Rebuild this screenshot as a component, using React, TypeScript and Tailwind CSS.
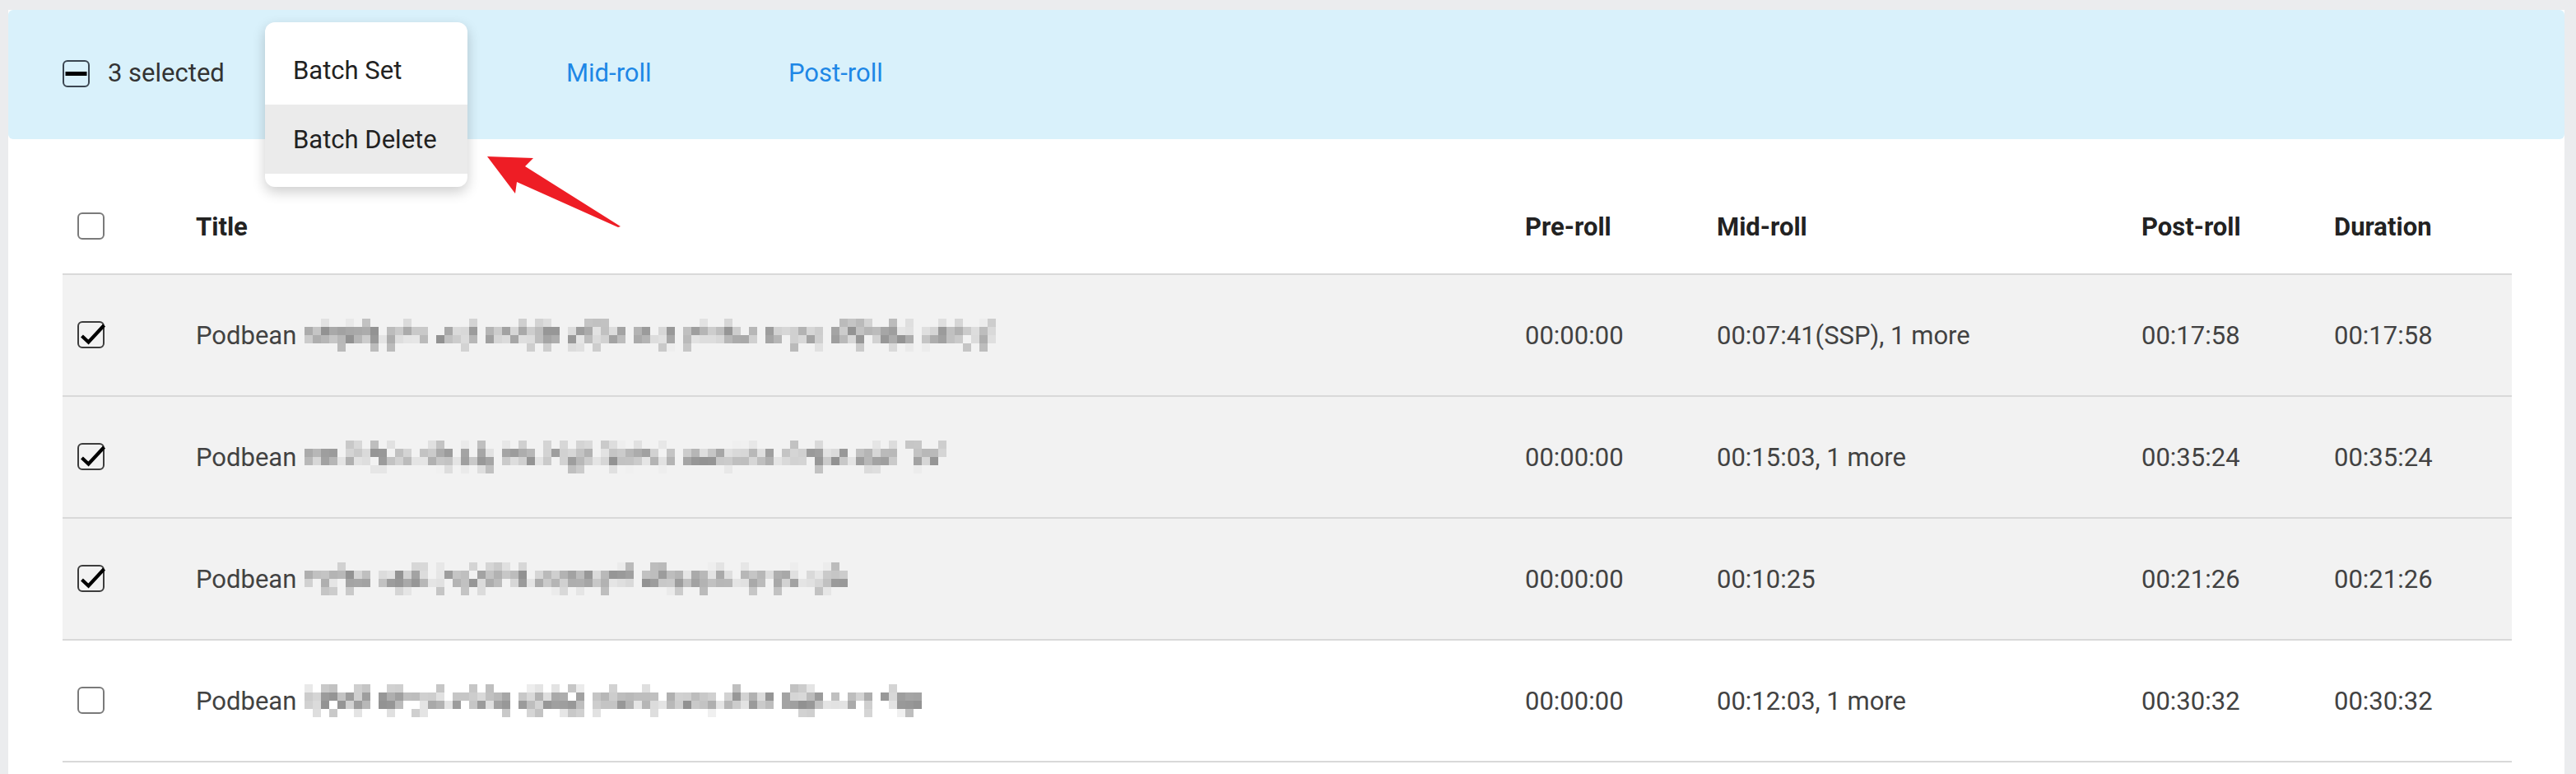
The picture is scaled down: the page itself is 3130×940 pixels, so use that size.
import React from "react";

const FONT = { fontFamily: "Roboto, 'Noto Sans', 'Liberation Sans', sans-serif" };

function makeMosaic(seed: number, cols: number): (string | null)[][] {
  let s = seed;
  const rnd = () => {
    s = (s * 1103515245 + 12345) & 0x7fffffff;
    return s / 0x7fffffff;
  };
  const out: (string | null)[][] = [];
  let word = 4 + Math.floor(rnd() * 8);
  for (let i = 0; i < cols; i++) {
    if (word <= 0 && i < cols - 2) {
      out.push([null, null, rnd() < 0.4 ? "#e4e4e4" : null, null]);
      word = 4 + Math.floor(rnd() * 9);
      continue;
    }
    word--;
    const col: (string | null)[] = [];
    const probs = [0.35, 0.95, 0.95, 0.3];
    for (let r = 0; r < 4; r++) {
      if (rnd() < probs[r]) {
        const mid = r === 1 || r === 2;
        const base = mid ? 145 : 185;
        const g = Math.round(base + rnd() * (mid ? 85 : 55));
        col.push(`rgb(${g},${g},${g})`);
      } else col.push(null);
    }
    out.push(col);
  }
  return out;
}

function Mosaic({ seed, cols }: { seed: number; cols: number }) {
  const data = makeMosaic(seed, cols);
  return (
    <div className="flex ml-[10px]">
      {data.map((col, i) => (
        <div key={i} className="flex flex-col">
          {col.map((c, j) => (
            <div key={j} className="w-[10px] h-[10px]" style={{ backgroundColor: c ?? "transparent" }} />
          ))}
        </div>
      ))}
    </div>
  );
}

function Checkbox({ checked }: { checked: boolean }) {
  return (
    <svg width="36" height="34" viewBox="0 0 36 34" className="block">
      <rect x="1" y="1" width="31" height="31" rx="5" fill="none" stroke={checked ? "#3d3d3d" : "#7a7a7a"} strokeWidth="2" />
      {checked && (
        <path d="M5.5 18 L13.5 25.5 L32.5 5" fill="none" stroke="#000" strokeWidth="4.2" strokeLinejoin="miter" />
      )}
    </svg>
  );
}

function Indeterminate() {
  return (
    <svg width="34" height="34" viewBox="0 0 34 34" className="block">
      <rect x="1" y="1" width="31" height="31" rx="5" fill="none" stroke="#3b4651" strokeWidth="2" />
      <rect x="3.5" y="14" width="26" height="5" fill="#000" />
    </svg>
  );
}

const rows = [
  { checked: true, seed: 11, cols: 84, pre: "00:00:00", mid: "00:07:41(SSP), 1 more", post: "00:17:58", dur: "00:17:58" },
  { checked: true, seed: 37, cols: 78, pre: "00:00:00", mid: "00:15:03, 1 more", post: "00:35:24", dur: "00:35:24" },
  { checked: true, seed: 73, cols: 66, pre: "00:00:00", mid: "00:10:25", post: "00:21:26", dur: "00:21:26" },
  { checked: false, seed: 151, cols: 75, pre: "00:00:00", mid: "00:12:03, 1 more", post: "00:30:32", dur: "00:30:32" },
];

const GRID = "grid grid-cols-[162px_1615px_233px_516px_234px_216px] items-center";

export default function App() {
  return (
    <div className="w-[3130px] h-[940px] bg-[#ebecee] overflow-hidden pl-[10px] pt-[12px] pr-[14px]" style={FONT}>
      <div className="relative bg-white h-[960px]">
        {/* selection bar */}
        <div className="h-[157px] bg-[#d9f1fb] rounded-[6px] flex items-center pl-[66px] pb-[2px] text-[31px]">
          <Indeterminate />
          <span className="ml-[21px] w-[557px] text-[#333]">3 selected</span>
          <span className="w-[270px] text-[#1e87e6]">Mid-roll</span>
          <span className="text-[#1e87e6]">Post-roll</span>
        </div>

        {/* table */}
        <div className="ml-[66px] mr-[64px] mt-[48px]">
          <div className={`${GRID} h-[117px] border-b-2 border-[#d9d9d9] text-[31px] font-bold text-[#222]`}>
            <div className="pl-[18px]">
              <Checkbox checked={false} />
            </div>
            <div className="pt-[3px]">Title</div>
            <div className="pt-[3px]">Pre-roll</div>
            <div className="pt-[3px]">Mid-roll</div>
            <div className="pt-[3px]">Post-roll</div>
            <div className="pt-[3px]">Duration</div>
          </div>
          {rows.map((r, i) => (
            <div
              key={i}
              className={`${GRID} h-[148px] border-b-2 border-[#d9d9d9] text-[31px] text-[#424242] ${r.checked ? "bg-[#f2f2f2]" : "bg-white"}`}
            >
              <div className="pl-[18px]">
                <Checkbox checked={r.checked} />
              </div>
              <div className="flex items-center">
                <span className="pt-[3px]">Podbean</span>
                <Mosaic seed={r.seed} cols={r.cols} />
              </div>
              <div className="pt-[3px]">{r.pre}</div>
              <div className="pt-[3px]">{r.mid}</div>
              <div className="pt-[3px]">{r.post}</div>
              <div className="pt-[3px]">{r.dur}</div>
            </div>
          ))}
        </div>

        {/* dropdown menu */}
        <div className="absolute left-[312px] top-[15px] w-[246px] bg-white rounded-[12px] py-[16px] shadow-[0_6px_16px_rgba(0,0,0,0.2)] text-[31px] text-[#222] overflow-hidden">
          <div className="h-[84px] flex items-center pl-[34px] pt-[3px]">Batch Set</div>
          <div className="h-[84px] flex items-center pl-[34px] pt-[3px] bg-[#ebebeb]">Batch Delete</div>
        </div>

        {/* red arrow annotation */}
        <svg className="absolute left-[570px] top-[168px]" width="190" height="105" viewBox="0 0 190 105">
          <polygon points="12,10 68,12 58,22 174,95 171,96 48,41 46,55" fill="#ee1d25" />
        </svg>
      </div>
    </div>
  );
}
